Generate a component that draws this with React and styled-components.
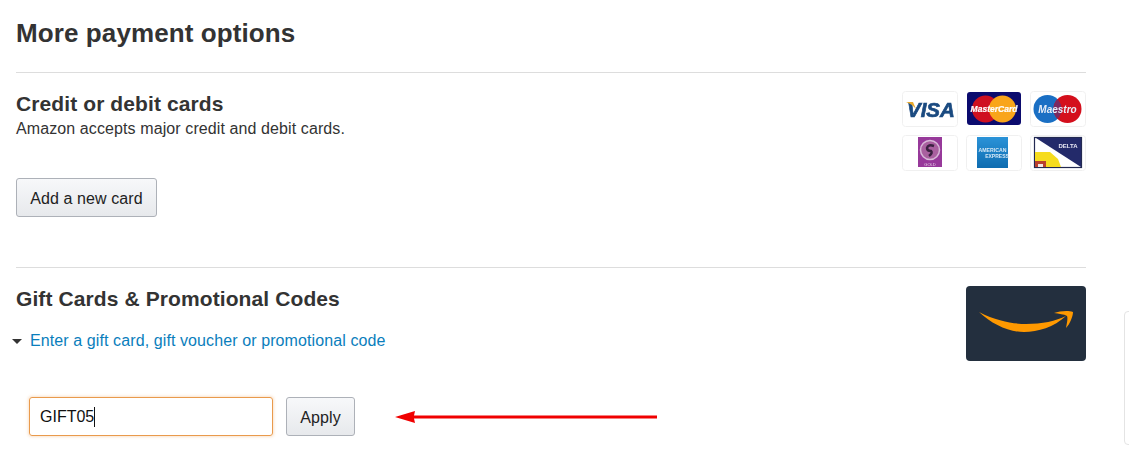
import styled, { createGlobalStyle } from "styled-components"

const GlobalStyle = createGlobalStyle`
    html, body {
        margin: 0;
        padding: 0;
        background: #fff;
        font-family: "Liberation Sans", Arial, sans-serif;
        color: #333;
    }
`

const Page = styled.main`
    position: relative;
    box-sizing: border-box;
    width: 1129px;
    height: 476px;
    padding: 0 43px 0 16px;
    overflow: hidden;
`

const Title = styled.h1`
    margin: 0;
    padding-top: 17px;
    height: 73px;
    box-sizing: border-box;
    font-size: 26px;
    letter-spacing: 0.1px;
    line-height: 32px;
    font-weight: 700;
    color: #333;
    border-bottom: 1px solid #ddd;
`

const Section = styled.section`
    display: flex;
    justify-content: space-between;
    height: ${(p) => p.$height}px;
    padding-top: 18px;
    box-sizing: border-box;
    border-bottom: ${(p) => (p.$line ? "1px solid #ddd" : "none")};
`

const Heading = styled.h2`
    margin: 1px 0 0;
    font-size: 21px;
    letter-spacing: 0.1px;
    line-height: 24px;
    font-weight: 700;
    color: #333;
`

const Note = styled.p`
    margin: 4px 0 0;
    font-size: 16px;
    letter-spacing: 0.1px;
    line-height: 18px;
    color: #333;
`

const Button = styled.button`
    box-sizing: border-box;
    height: 39px;
    padding: 2px 0 0;
    font-family: inherit;
    font-size: 16px;
    letter-spacing: 0.1px;
    color: #222;
    background: linear-gradient(#f7f8fa, #e7e9ec);
    border: 1px solid #adb1b8;
    border-radius: 3px;
`

const AddCard = styled(Button)`
    display: block;
    margin-top: 40px;
    width: 141px;
`

const CardGrid = styled.div`
    display: grid;
    grid-template-columns: repeat(3, 56px);
    grid-auto-rows: 36px;
    column-gap: 8px;
    row-gap: 8px;
`

const CardTile = styled.svg`
    display: block;
    width: 56px;
    height: 36px;
    filter: blur(0.35px);
`

const GiftImage = styled.svg`
    display: block;
    width: 120px;
    height: 75px;
`

const Disclosure = styled.div`
    display: flex;
    align-items: center;
    margin: 18px 0 0 -4px;
    gap: 8px;
    height: 24px;
`

const Caret = styled.span`
    width: 0;
    height: 0;
    border-left: 5px solid transparent;
    border-right: 5px solid transparent;
    border-top: 5px solid #333;
`

const CodeLink = styled.a`
    font-size: 16px;
    letter-spacing: 0.1px;
    color: #0a7ebc;
    text-decoration: none;
`

const CodeRow = styled.div`
    display: flex;
    align-items: center;
    margin: 44px 0 0 13px;
`

const CodeField = styled.div`
    box-sizing: border-box;
    display: flex;
    align-items: center;
    width: 244px;
    height: 39px;
    padding: 0 10px;
    font-size: 16px;
    color: #111;
    border: 1px solid #e99a4c;
    border-radius: 3px;
    box-shadow: 0 0 3px 1px rgba(228, 121, 17, 0.22);
`

const Cursor = styled.span`
    width: 1px;
    height: 20px;
    background: #111;
`

const ApplyButton = styled(Button)`
    width: 69px;
    margin-left: 13px;
`

const Arrow = styled.svg`
    display: block;
    width: 264px;
    height: 16px;
    margin-left: 40px;
`

const SidePanel = styled.div`
    position: absolute;
    left: 1124px;
    top: 311px;
    width: 12px;
    height: 134px;
    box-sizing: border-box;
    border: 1px solid #e4e4e4;
    border-radius: 4px;
    background: #fff;
`

const Frame = ({ children }) => (
    <CardTile viewBox="0 0 56 36">
        <rect x="0.5" y="0.5" width="55" height="35" rx="3" fill="#fff" stroke="#f0f0f0" />
        {children}
    </CardTile>
)

const VisaCard = () => (
    <Frame>
        <text x="5" y="26" fontFamily="Liberation Sans" fontStyle="italic" fontWeight="700" fontSize="20.5" fill="#1a4a80" stroke="#1a4a80" strokeWidth="0.7">VISA</text>
        <path d="M4 11 H11 L14 18 Q10 13 4 11Z" fill="#e8a92c" />
    </Frame>
)

const MasterCard = () => (
    <CardTile viewBox="0 0 56 36">
        <rect x="1" y="1" width="54" height="33" rx="3" fill="#0b0b6e" />
        <circle cx="19.5" cy="18" r="13.5" fill="#cf1020" />
        <circle cx="36.5" cy="18" r="13.5" fill="#f9a51a" />
        <text x="28" y="21" textAnchor="middle" fontFamily="Liberation Sans" fontStyle="italic" fontWeight="700" fontSize="8.5" fill="#fff" stroke="#fff" strokeWidth="0.2">MasterCard</text>
    </CardTile>
)

const MaestroCard = () => (
    <Frame>
        <circle cx="17.5" cy="18" r="14" fill="#1a6fc4" />
        <circle cx="37.5" cy="18" r="14" fill="#d40f1c" />
        <path d="M27.5 8.2 A14 14 0 0 1 27.5 27.8 A14 14 0 0 1 27.5 8.2Z" fill="#7a2a62" />
        <text x="27.5" y="22" textAnchor="middle" fontFamily="Liberation Sans" fontStyle="italic" fontWeight="700" fontSize="10" fill="#e8eef8">Maestro</text>
    </Frame>
)

const GoldCard = () => (
    <Frame>
        <rect x="16" y="2" width="24" height="30" fill="#97399a" />
        <circle cx="28" cy="15" r="9.5" fill="#a9609f" stroke="#d8b9d8" strokeWidth="1.5" />
        <path d="M32 11 Q26 9 25 13 Q25 16 29 16 Q31 18 27 21" fill="none" stroke="#3a2140" strokeWidth="2.5" />
        <text x="28" y="31" textAnchor="middle" fontFamily="Liberation Sans" fontSize="4" fill="#e7d5e8">GOLD</text>
    </Frame>
)

const AmexCard = () => (
    <Frame>
        <defs>
            <linearGradient id="amexFill" x1="0" y1="0" x2="0" y2="1">
                <stop offset="0" stopColor="#2b93d8" />
                <stop offset="1" stopColor="#0e6cb0" />
            </linearGradient>
        </defs>
        <rect x="11" y="2" width="31" height="31" fill="url(#amexFill)" />
        <text x="26.5" y="16.5" textAnchor="middle" fontFamily="Liberation Sans" fontWeight="700" fontSize="5.2" fill="#d5e8f6">AMERICAN</text>
        <text x="31" y="23" textAnchor="middle" fontFamily="Liberation Sans" fontWeight="700" fontSize="5" fill="#d5e8f6">EXPRESS</text>
    </Frame>
)

const DeltaCard = () => (
    <Frame>
        <rect x="4.5" y="2.5" width="47" height="30" fill="#fff" stroke="#232a52" strokeWidth="1.2" />
        <path d="M6 3 H51 V32 Z" fill="#232a6a" />
        <path d="M5 17 H20 L28 24 L31 32 H15 V26 H5Z" fill="#f6dc1e" />
        <path d="M5 26 H16 V32 H5Z" fill="#b8402e" />
        <path d="M8 29 H13 V32 H8Z" fill="#f3e7e0" />
        <text x="38" y="13" textAnchor="middle" fontFamily="Liberation Sans" fontWeight="700" fontSize="6" fill="#e8e8f4">DELTA</text>
    </Frame>
)

const AmazonGift = () => (
    <GiftImage viewBox="0 0 120 75">
        <rect width="120" height="75" rx="4" fill="#232f3e" />
        <path d="M13 26 C32 36 50 38 60 38 C76 38 90 35 100 30 C88 41 72 46 58 46 C42 46 26 38 13 26Z" fill="#ff9900" />
        <path d="M88 27 C94 25 102 24 107 26 C107 30 104 38 100 42 C101 37 102 32 101 30 C98 28 93 28 88 27Z" fill="#ff9900" />
    </GiftImage>
)

export default function App() {
    return (
        <>
            <GlobalStyle />
            <Page>
                <Title>More payment options</Title>
                <Section $height={195} $line>
                    <div>
                        <Heading>Credit or debit cards</Heading>
                        <Note>Amazon accepts major credit and debit cards.</Note>
                        <AddCard>Add a new card</AddCard>
                    </div>
                    <CardGrid>
                        <VisaCard />
                        <MasterCard />
                        <MaestroCard />
                        <GoldCard />
                        <AmexCard />
                        <DeltaCard />
                    </CardGrid>
                </Section>
                <Section $height={208}>
                    <div>
                        <Heading>Gift Cards &amp; Promotional Codes</Heading>
                        <Disclosure>
                            <Caret />
                            <CodeLink href="#">Enter a gift card, gift voucher or promotional code</CodeLink>
                        </Disclosure>
                        <CodeRow>
                            <CodeField>GIFT05<Cursor /></CodeField>
                            <ApplyButton>Apply</ApplyButton>
                            <Arrow viewBox="0 0 264 16">
                                <path d="M0 8 L20 2 L19 6.5 L262 6.5 L262 9.5 L19 9.5 L20 14 Z" fill="#f00000" />
                            </Arrow>
                        </CodeRow>
                    </div>
                    <AmazonGift />
                </Section>
                <SidePanel />
            </Page>
        </>
    )
}
